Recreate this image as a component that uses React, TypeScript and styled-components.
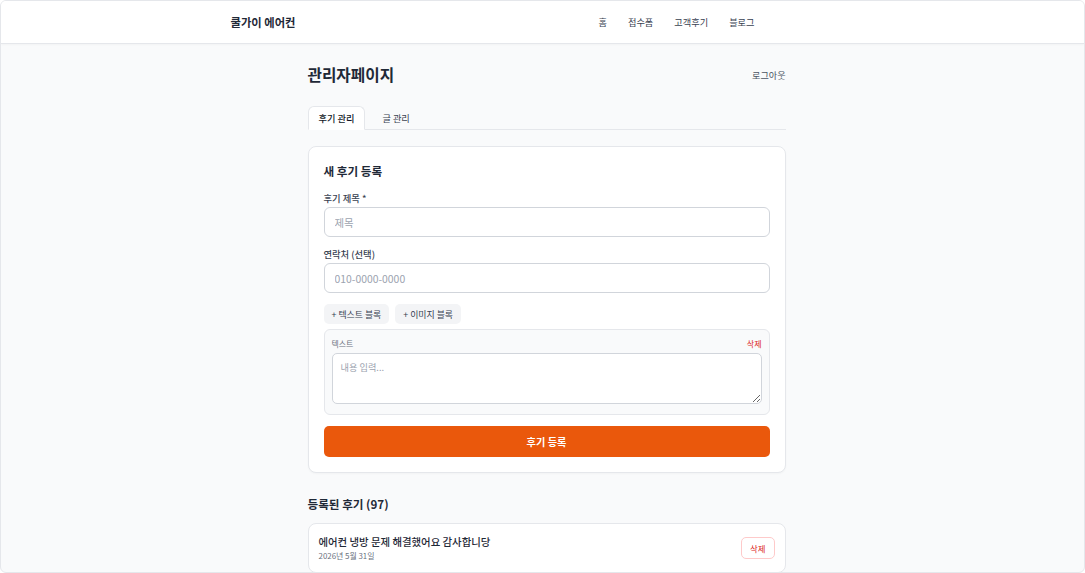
import React from 'react';
import styled, { createGlobalStyle } from 'styled-components';

const GlobalStyle = createGlobalStyle`
  * { box-sizing: border-box; }
  html, body { margin: 0; padding: 0; }
  body {
    font-family: "Noto Sans CJK KR", "Noto Sans", sans-serif;
    color: #111827;
    background: #ffffff;
  }
`;

const Frame = styled.div`
  height: 100vh;
  border: 1px solid #e5e7eb;
  border-radius: 6px;
  overflow: hidden;
  background: #f9fafb;
`;

const Header = styled.header`
  height: 43px;
  background: #ffffff;
  border-bottom: 1px solid #e5e7eb;
  box-shadow: 0 1px 2px rgba(0, 0, 0, 0.03);
`;

const HeaderInner = styled.div`
  width: 524px;
  height: 100%;
  margin-left: calc(50% - 312px);
  display: flex;
  align-items: center;
  justify-content: space-between;
`;

const Logo = styled.div`
  font-size: 11.3px;
  font-weight: 700;
  color: #1f2937;
`;

const Nav = styled.nav`
  display: flex;
  gap: 21px;
`;

const NavLink = styled.a`
  font-size: 9.2px;
  color: #374151;
  text-decoration: none;
`;

const Main = styled.main`
  width: 478px;
  margin-left: calc(50% - 235px);
  padding-top: 20px;
`;

const TitleRow = styled.div`
  display: flex;
  align-items: center;
  justify-content: space-between;
  height: 22px;
`;

const PageTitle = styled.h1`
  margin: 0;
  font-size: 15.7px;
  font-weight: 700;
  color: #1f2937;
  line-height: 22px;
`;

const Logout = styled.button`
  border: none;
  background: none;
  padding: 0;
  font-family: inherit;
  font-size: 9.1px;
  color: #4b5563;
`;

const Tabs = styled.div`
  display: flex;
  gap: 6px;
  margin-top: 20px;
  border-bottom: 1px solid #e5e7eb;
`;

const Tab = styled.button<{ $active?: boolean }>`
  height: 24px;
  padding: 0 10px;
  margin-bottom: -1px;
  font-family: inherit;
  font-size: 9.2px;
  font-weight: ${(p) => (p.$active ? 500 : 400)};
  color: ${(p) => (p.$active ? '#111827' : '#374151')};
  background: ${(p) => (p.$active ? '#ffffff' : 'transparent')};
  border: 1px solid ${(p) => (p.$active ? '#e5e7eb' : 'transparent')};
  border-bottom-color: ${(p) => (p.$active ? '#ffffff' : 'transparent')};
  border-radius: 6px 6px 0 0;
`;

const Card = styled.section`
  margin-top: 16px;
  background: #ffffff;
  border: 1px solid #e5e7eb;
  border-radius: 8px;
  padding: 16px 15px 15px;
  box-shadow: 0 1px 2px rgba(0, 0, 0, 0.03);
`;

const CardTitle = styled.h2`
  margin: 0;
  font-size: 11.6px;
  font-weight: 700;
  line-height: 16px;
  color: #1f2937;
`;

const Field = styled.div<{ $top: number }>`
  margin-top: ${(p) => p.$top}px;
  display: flex;
  flex-direction: column;
  gap: 3px;
`;

const Label = styled.label`
  font-size: 9.3px;
  font-weight: 500;
  line-height: 12px;
  color: #374151;
`;

const Input = styled.input`
  height: 30px;
  border: 1px solid #d1d5db;
  border-radius: 6px;
  padding: 0 10px;
  font-family: inherit;
  font-size: 10.4px;
  color: #111827;
  &::placeholder { color: #9ca3af; }
`;

const BlockButtons = styled.div`
  display: flex;
  gap: 6px;
  margin-top: 11px;
`;

const GhostButton = styled.button`
  height: 20px;
  padding: 0 8px;
  border: none;
  border-radius: 5px;
  background: #f3f4f6;
  font-family: inherit;
  font-size: 8.9px;
  color: #374151;
`;

const Block = styled.div`
  margin-top: 5px;
  background: #f9fafb;
  border: 1px solid #e5e7eb;
  border-radius: 6px;
  padding: 8px 7px 10px;
`;

const BlockHead = styled.div`
  display: flex;
  justify-content: space-between;
  align-items: center;
  height: 10px;
`;

const BlockLabel = styled.span`
  font-size: 7.9px;
  color: #6b7280;
`;

const RemoveLink = styled.button`
  border: none;
  background: none;
  padding: 0;
  font-family: inherit;
  font-size: 8px;
  color: #dc2626;
`;

const TextArea = styled.textarea`
  display: block;
  width: 100%;
  height: 51px;
  margin-top: 5px;
  border: 1px solid #d1d5db;
  border-radius: 5px;
  padding: 6px 8px;
  font-family: inherit;
  font-size: 9.2px;
  background: #ffffff;
  &::placeholder { color: #9ca3af; }
`;

const SubmitButton = styled.button`
  display: block;
  width: 100%;
  height: 31px;
  margin-top: 11px;
  border: none;
  border-radius: 5px;
  background: #ea580c;
  color: #ffffff;
  font-family: inherit;
  font-size: 10.2px;
  font-weight: 700;
`;

const SectionTitle = styled.h2`
  margin: 23px 0 0;
  font-size: 11.6px;
  font-weight: 700;
  line-height: 16px;
  color: #1f2937;
`;

const ReviewList = styled.ul`
  list-style: none;
  margin: 11px 0 0;
  padding: 0;
  display: flex;
  flex-direction: column;
  gap: 8px;
`;

const ReviewItem = styled.li`
  display: flex;
  align-items: center;
  justify-content: space-between;
  background: #ffffff;
  border: 1px solid #e5e7eb;
  border-radius: 8px;
  padding: 10px;
`;

const ReviewText = styled.div`
  display: flex;
  flex-direction: column;
`;

const ReviewTitle = styled.span`
  font-size: 10.4px;
  font-weight: 500;
  line-height: 16px;
  color: #1f2937;
`;

const ReviewDate = styled.span`
  font-size: 7.9px;
  line-height: 12px;
  color: #6b7280;
`;

const DeleteButton = styled.button`
  height: 22px;
  padding: 0 8px;
  border: 1px solid #fecaca;
  border-radius: 5px;
  background: #ffffff;
  font-family: inherit;
  font-size: 8.4px;
  color: #dc2626;
`;

const reviews = [
  { title: '에어컨 냉방 문제 해결했어요 감사합니당', date: '2026년 5월 31일' },
];

export default function App() {
  return (
    <>
      <GlobalStyle />
      <Frame>
        <Header>
          <HeaderInner>
            <Logo>쿨가이 에어컨</Logo>
            <Nav>
              <NavLink href="#">홈</NavLink>
              <NavLink href="#">접수폼</NavLink>
              <NavLink href="#">고객후기</NavLink>
              <NavLink href="#">블로그</NavLink>
            </Nav>
          </HeaderInner>
        </Header>
        <Main>
          <TitleRow>
            <PageTitle>관리자페이지</PageTitle>
            <Logout>로그아웃</Logout>
          </TitleRow>
          <Tabs>
            <Tab $active>후기 관리</Tab>
            <Tab>글 관리</Tab>
          </Tabs>
          <Card>
            <CardTitle>새 후기 등록</CardTitle>
            <Field $top={13}>
              <Label>후기 제목 *</Label>
              <Input placeholder="제목" />
            </Field>
            <Field $top={11}>
              <Label>연락처 (선택)</Label>
              <Input placeholder="010-0000-0000" />
            </Field>
            <BlockButtons>
              <GhostButton>+ 텍스트 블록</GhostButton>
              <GhostButton>+ 이미지 블록</GhostButton>
            </BlockButtons>
            <Block>
              <BlockHead>
                <BlockLabel>텍스트</BlockLabel>
                <RemoveLink>삭제</RemoveLink>
              </BlockHead>
              <TextArea placeholder="내용 입력..." />
            </Block>
            <SubmitButton>후기 등록</SubmitButton>
          </Card>
          <SectionTitle>등록된 후기 (97)</SectionTitle>
          <ReviewList>
            {reviews.map((r) => (
              <ReviewItem key={r.title}>
                <ReviewText>
                  <ReviewTitle>{r.title}</ReviewTitle>
                  <ReviewDate>{r.date}</ReviewDate>
                </ReviewText>
                <DeleteButton>삭제</DeleteButton>
              </ReviewItem>
            ))}
          </ReviewList>
        </Main>
      </Frame>
    </>
  );
}
